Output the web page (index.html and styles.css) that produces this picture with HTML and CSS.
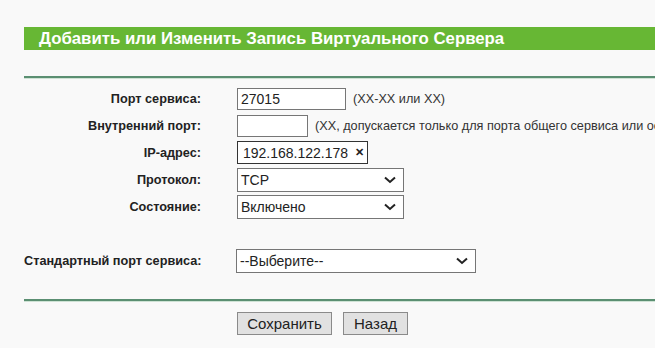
FILE: index.html
```html
<!DOCTYPE html>
<html lang="ru">
<head>
    <meta charset="UTF-8">
    <title>Виртуальные серверы</title>
    <link rel="stylesheet" href="styles.css">
</head>
<body>
    <div class="page">
        <div class="title-bar">Добавить или Изменить Запись Виртуального Сервера</div>
        <div class="rule"></div>

        <div class="form">
            <div class="row">
                <label>Порт сервиса:</label>
                <div class="field">
                    <input type="text" class="port" value="27015">
                    <span class="hint">(XX-XX или XX)</span>
                </div>
            </div>
            <div class="row">
                <label>Внутренний порт:</label>
                <div class="field">
                    <input type="text" class="port-small">
                    <span class="hint">(XX, допускается только для порта общего сервиса или оставьте пустым)</span>
                </div>
            </div>
            <div class="row">
                <label>IP-адрес:</label>
                <div class="field">
                    <div class="ip-box">192.168.122.178 <span class="clear">&#x2715;</span></div>
                </div>
            </div>
            <div class="row">
                <label>Протокол:</label>
                <div class="field">
                    <div class="select">TCP <svg width="12" height="8" viewBox="0 0 12 8"><path d="M1 1.5 L6 6 L11 1.5" fill="none" stroke="#222" stroke-width="2"/></svg></div>
                </div>
            </div>
            <div class="row">
                <label>Состояние:</label>
                <div class="field">
                    <div class="select">Включено <svg width="12" height="8" viewBox="0 0 12 8"><path d="M1 1.5 L6 6 L11 1.5" fill="none" stroke="#222" stroke-width="2"/></svg></div>
                </div>
            </div>
        </div>

        <div class="std-row">
            <label>Стандартный порт сервиса:</label>
            <div class="select wide">--Выберите-- <svg width="12" height="8" viewBox="0 0 12 8"><path d="M1 1.5 L6 6 L11 1.5" fill="none" stroke="#222" stroke-width="2"/></svg></div>
        </div>

        <div class="rule"></div>

        <div class="buttons">
            <button class="btn-save">Сохранить</button>
            <button class="btn-back">Назад</button>
        </div>
    </div>
</body>
</html>
```

FILE: styles.css
```css
body {
    margin: 0;
    background: #fff;
    font-family: "Liberation Sans", Arial, sans-serif;
    color: #222;
    overflow: hidden;
}
.page {
    background: #f9f9f9;
    padding: 27px 0 12px 24px;
    height: 309px;
    overflow: hidden;
}
.title-bar {
    background: #67b734;
    color: #fff;
    font-weight: bold;
    font-size: 16.8px;
    height: 23px;
    line-height: 23px;
    padding-left: 15px;
    white-space: nowrap;
}
.rule {
    margin-top: 26px;
    border-top: 2px solid #5b8f72;
    border-bottom: 1px solid #cfe3d5;
}
.form {
    margin-top: 6px;
}
.row {
    display: flex;
    align-items: center;
    height: 27px;
}
.row label {
    flex-shrink: 0;
    width: 177px;
    text-align: right;
    font-weight: bold;
    font-size: 12.7px;
    margin-right: 36px;
    white-space: nowrap;
}
.field {
    flex-shrink: 0;
    display: flex;
    align-items: center;
    gap: 7px;
    white-space: nowrap;
}
input {
    box-sizing: border-box;
    height: 22px;
    border: 1px solid #767676;
    background: #fff;
    font: 14px "Liberation Sans", Arial, sans-serif;
    padding: 0 3px;
    color: #222;
}
.port {
    width: 109px;
}
.port-small {
    width: 71px;
}
.hint {
    font-size: 12.7px;
    color: #333;
}
.ip-box {
    box-sizing: border-box;
    width: 131px;
    height: 23px;
    border: 1px solid #333;
    background: #fff;
    font-size: 14px;
    padding: 0 0 0 5px;
    display: flex;
    align-items: center;
    gap: 7px;
}
.clear {
    font-size: 11px;
    font-weight: bold;
}
.select {
    box-sizing: border-box;
    width: 167px;
    height: 24px;
    border: 1px solid #767676;
    background: #fff;
    font-size: 14px;
    padding: 0 7px 0 3px;
    display: flex;
    align-items: center;
    justify-content: space-between;
}
.select.wide {
    width: 240px;
}
.std-row {
    display: flex;
    align-items: center;
    margin-top: 29px;
}
.std-row label {
    flex-shrink: 0;
    width: 212px;
    font-weight: bold;
    font-size: 12.7px;
    white-space: nowrap;
}
.buttons {
    display: flex;
    gap: 11px;
    padding-left: 213px;
    margin-top: 10px;
}
button {
    height: 23px;
    padding: 0;
    background: #e1e1e1;
    border: 1px solid #8a8a8a;
    border-radius: 0;
    font: 15px "Liberation Sans", Arial, sans-serif;
    color: #222;
}
.btn-save {
    width: 95px;
}
.btn-back {
    width: 65px;
}
```
